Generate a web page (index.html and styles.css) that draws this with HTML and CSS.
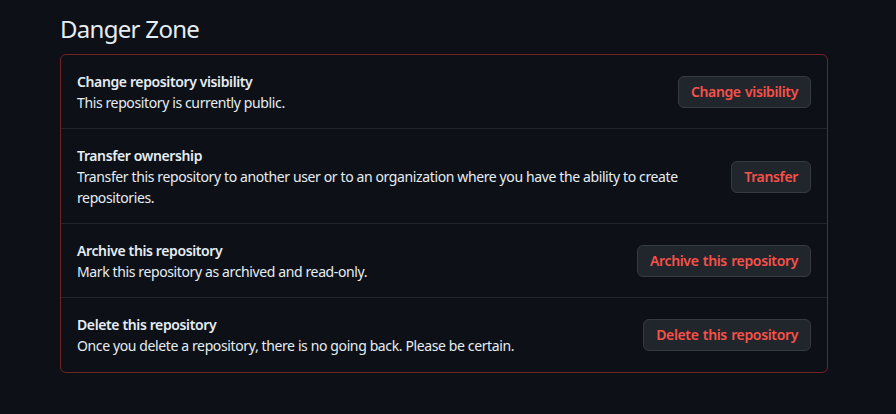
FILE: index.html
```html
<!DOCTYPE html>
<html>
<head>
<meta charset="utf-8">
<link rel="stylesheet" href="styles.css">
</head>
<body>
<div class="page">
  <h2 class="heading">Danger Zone</h2>
  <div class="box">
    <div class="row">
      <div class="info">
        <div class="title">Change repository visibility</div>
        <div class="desc">This repository is currently public.</div>
      </div>
      <button class="btn">Change visibility</button>
    </div>
    <div class="row">
      <div class="info">
        <div class="title">Transfer ownership</div>
        <div class="desc">Transfer this repository to another user or to an organization where you have the ability to create repositories.</div>
      </div>
      <button class="btn">Transfer</button>
    </div>
    <div class="row">
      <div class="info">
        <div class="title">Archive this repository</div>
        <div class="desc">Mark this repository as archived and read-only.</div>
      </div>
      <button class="btn">Archive this repository</button>
    </div>
    <div class="row">
      <div class="info">
        <div class="title">Delete this repository</div>
        <div class="desc">Once you delete a repository, there is no going back. Please be certain.</div>
      </div>
      <button class="btn">Delete this repository</button>
    </div>
  </div>
</div>
</body>
</html>
```
FILE: styles.css
```css
html, body {
  margin: 0;
  padding: 0;
  background: #0d1117;
  height: 100%;
}
body {
  font-family: "Noto Sans", "Liberation Sans", sans-serif;
  color: #e6edf3;
  font-size: 14px;
  line-height: 21px;
  letter-spacing: -0.38px;
}
.page {
  width: 768px;
  margin-left: 60px;
  padding-top: 14px;
}
.heading {
  margin: 0 0 10px 0;
  font-size: 24px;
  font-weight: 400;
  line-height: 30px;
  letter-spacing: -0.7px;
  color: #e6edf3;
}
.box {
  border: 1px solid #732325;
  border-radius: 6px;
}
.row {
  display: flex;
  align-items: center;
  justify-content: space-between;
  padding: 16px 16px 15px;
  border-top: 1px solid #21262d;
}
.row:first-child {
  border-top: none;
}
.row:last-child {
  padding-bottom: 16px;
}
.info {
  flex: 1;
  padding-right: 40px;
}
.title {
  font-weight: 600;
  color: #e6edf3;
}
.desc {
  color: #e6edf3;
}
.btn {
  flex: none;
  height: 32px;
  padding: 0 12px;
  background: #21262d;
  border: 1px solid #363b42;
  border-radius: 6px;
  color: #f85149;
  font-family: inherit;
  font-size: 14px;
  font-weight: 600;
  line-height: 20px;
  letter-spacing: -0.35px;
  word-spacing: 1px;
}
```
